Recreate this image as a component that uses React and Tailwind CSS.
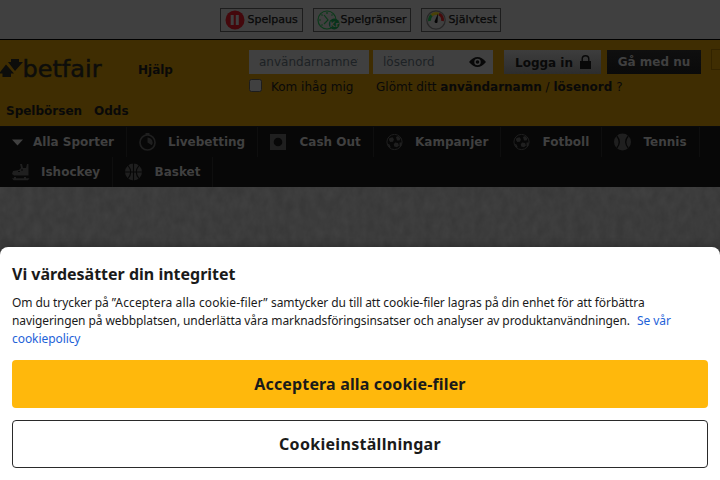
import React from "react";

function PauseIcon() {
  return (
    <svg width="20" height="20" viewBox="0 0 20 20">
      <circle cx="10" cy="10" r="9.5" fill="#44080c" />
      <rect x="5.7" y="5" width="3" height="10" fill="#404040" />
      <rect x="10.8" y="5" width="3" height="10" fill="#404040" />
    </svg>
  );
}

function LimitIcon() {
  return (
    <svg width="24" height="20" viewBox="0 0 24 20">
      <circle cx="10" cy="10" r="9" fill="none" stroke="#0b3a1a" strokeWidth="1.2" />
      <path d="M7 5l4 5-4 4M10 2v2M2 10h2M16 10h2M4.5 4.5l1 1M15.5 4.5l-1 1M4.5 15.5l1-1" fill="none" stroke="#0b3a1a" strokeWidth="1.2" />
      <circle cx="17.2" cy="14" r="5.4" fill="#08331a" />
      <text x="17.2" y="16.8" fontSize="7.5" fontWeight="700" fontFamily="DejaVu Sans, sans-serif" textAnchor="middle" fill="#404040" stroke="none">Kr</text>
    </svg>
  );
}

function GaugeIcon() {
  return (
    <svg width="20" height="20" viewBox="0 0 20 20" fill="none">
      <circle cx="10" cy="10" r="9.2" stroke="#272727" strokeWidth="1.2" />
      <path d="M3.5 11A6.8 6.8 0 0 1 5.6 5.2" stroke="#0b3a1a" strokeWidth="2.8" />
      <path d="M5.6 5.2A6.8 6.8 0 0 1 13 4" stroke="#4a4208" strokeWidth="2.8" />
      <path d="M13 4A6.8 6.8 0 0 1 16.5 11" stroke="#440b0c" strokeWidth="2.8" />
      <path d="M12 3.5l-.5 8.7a1.6 1.6 0 0 1-3-.7z" fill="#050505" />
    </svg>
  );
}

function Badge({ className, label, icon }) {
  return (
    <div className={"flex h-6 items-center border border-[#1d1d1d] text-[#080808] whitespace-nowrap " + className}>
      {icon}
      <span className="pt-px [-webkit-text-stroke:0.25px_#080808]">{label}</span>
    </div>
  );
}

function Logo() {
  return (
    <svg width="110" height="30" viewBox="0 0 110 30">
      <path d="M11 3h8v3h4l-8 9-7-9h3zM6 8.500l8 9h-3V21H2.500v-3.500H-1z" fill="#0d0d0b" />
      <text x="22.500" y="20.700" fontSize="23.500" fontFamily="DejaVu Sans, sans-serif" textLength="79" lengthAdjust="spacingAndGlyphs" fill="#0d0d0b" stroke="#0d0d0b" strokeWidth=".5">betfair</text>
    </svg>
  );
}

function Ball() {
  return (
    <svg width="17" height="17" viewBox="0 0 17 17">
      <circle cx="8.500" cy="8" r="7.600" fill="none" stroke="#1f1f1f" strokeWidth="1" />
      <path d="M3.500 4l3-.8 1.500 2-1 2.500-2.800.3L2.900 6zM10 3l2-1 2.500 2.500-1 2-2.500 0zM9 8.500l3 .5 1 2.500-2 1.800-2.800-.8L7.700 10.500zM1 9.500l2.500 1 1.200 2.500-1 1zM13.500 8.500l2.500 0-1 4-1.500 0z" fill="#1f1f1f" />
    </svg>
  );
}

function Clock() {
  return (
    <svg width="18" height="18" viewBox="0 0 18 18">
      <circle cx="8.5" cy="9.5" r="7.5" fill="none" stroke="#1f1f1f" strokeWidth="1.7" />
      <path d="M8.5 4.5a5 5 0 0 1 4.3 7.8L8.5 9.5zM6.5 0h4v2h-4z" fill="#1f1f1f" />
    </svg>
  );
}

function CashOut() {
  return (
    <svg width="16" height="16" viewBox="0 0 16 16">
      <path d="M0 0h16v16H0z" fill="#1f1f1f" />
      <circle cx="8" cy="8" r="4.3" fill="#070707" />
    </svg>
  );
}

function Tennis() {
  return (
    <svg width="18" height="18" viewBox="0 0 18 18">
      <circle cx="8.5" cy="9" r="8.5" fill="#1f1f1f" />
      <path d="M2.8 3q5 6 0 12M14.2 3q-5 6 0 12" fill="none" stroke="#070707" strokeWidth="1.3" />
    </svg>
  );
}

function Skate() {
  return (
    <svg width="18" height="18" viewBox="0 0 18 18" fill="#1f1f1f">
      <path d="M8 1h2l1 4h3l1-4h1.5v11.5H2L0 11l1-3 6-1 2-2zM2 14h2v1.2h8V14h2v1.2h3.5l-1.5 2H1.5L0 15.2h2z" />
      <path d="M6 8.5h2M9 7h2" stroke="#070707" />
    </svg>
  );
}

function Basket() {
  return (
    <svg width="18" height="18" viewBox="0 0 18 18">
      <circle cx="8.5" cy="9" r="8.5" fill="#1f1f1f" />
      <path d="M8.5 0v18M0 9h17M3 2.5q5.500 6.500 0 13M14 2.500q-5.500 6.500 0 13" fill="none" stroke="#070707" strokeWidth="1.1" />
    </svg>
  );
}

function Caret() {
  return (
    <svg width="11" height="7" viewBox="0 0 11 7">
      <path d="M0 .5h11L5.500 6.500z" fill="#404040" />
    </svg>
  );
}

function NavItem({ width, iconWidth = "w-[29px]", icon, label }) {
  return (
    <li className={"flex h-[30px] shrink-0 items-center border-r border-[#0e0e0e] pl-3 " + width}>
      <span className={"shrink-0 " + iconWidth}>{icon}</span>
      <span className="whitespace-nowrap">{label}</span>
    </li>
  );
}

function Texture() {
  return (
    <svg width="720" height="80" className="block">
      <filter id="grain" x="0" y="0" width="100%" height="100%" colorInterpolationFilters="sRGB">
        <feTurbulence type="fractalNoise" baseFrequency=".12 .08" numOctaves="3" seed="4" />
        <feColorMatrix values=".045 0 0 0 .212  .045 0 0 0 .212  .045 0 0 0 .212  0 0 0 0 1" />
      </filter>
      <rect width="720" height="80" fill="#3a3a3a" filter="url(#grain)" />
    </svg>
  );
}

function Header() {
  return (
    <header className="flex h-[86px] flex-col bg-[#3f2d02] text-[#090909]">
      <div className="flex h-[56px] pt-[9px]">
        <div className="flex w-[249px] shrink-0">
          <div className="w-[138px] pt-[7px]"><Logo /></div>
          <a className="pt-[13px] font-bold leading-4">Hjälp</a>
        </div>
        <div className="flex shrink-0 flex-col pt-px">
          <div className="flex h-6">
            <div className="w-[120px] overflow-hidden bg-[#404040] pl-[10px] leading-6 text-[#1d2225]">
              <div className="w-[99px] overflow-hidden whitespace-nowrap">användarnamnet</div>
            </div>
            <div className="ml-1 flex w-[120px] items-center justify-between bg-[#404040] pl-[10px] pr-[7px] text-[#1d2225]">
              lösenord
              <svg width="17" height="12" viewBox="0 0 17 12">
                <path d="M0 6Q8.500-4 17 6Q8.500 16 0 6z" fill="#080808" />
                <circle cx="8.500" cy="6" r="3.200" fill="#404040" />
                <circle cx="8.500" cy="6" r="1.800" fill="#080808" />
              </svg>
            </div>
            <button className="ml-[11px] flex w-[97px] items-center bg-linear-to-b from-[#3d3d3d] to-[#2d2d2d] pl-[11px] pt-px font-bold">
              <span className="whitespace-nowrap">Logga in</span>
              <svg className="-mt-[2px] ml-[7px]" width="11" height="14" viewBox="0 0 11 14">
                <path d="M0 6h11v8H0z" fill="#080808" />
                <path d="M2.200 7V4a3.300 3.300 0 0 1 6.600 0v3" fill="none" stroke="#080808" strokeWidth="1.400" />
              </svg>
            </button>
            <button className="ml-[6px] w-[94px] bg-linear-to-b from-[#0f0f0f] to-[#0a0a0a] font-bold text-[#404040]">Gå med nu</button>
            <div className="-mt-px ml-[10px] h-[21px] w-[12px] border border-[#322300]" />
          </div>
          <div className="flex pt-[5px] leading-4">
            <span className="h-[13px] w-[13px] rounded-[2.500px] border border-[#1d1d1d] bg-[#404040]" />
            <span className="ml-[9px] w-[105px]">Kom ihåg mig</span>
            <span className="whitespace-nowrap">Glömt ditt <b>användarnamn</b> / <b>lösenord</b> ?</span>
          </div>
        </div>
      </div>
      <div className="flex gap-3 pl-[6px] pt-[7px] font-bold leading-4">
        <a>Spelbörsen</a>
        <a>Odds</a>
      </div>
    </header>
  );
}

function CookieDialog() {
  return (
    <section className="absolute inset-x-0 bottom-0 h-[233px] rounded-t-[8px] bg-white px-3 pt-[15px] font-['Noto_Sans',sans-serif] text-[#1a1a1a] shadow-[0_0_8px_rgba(0,0,0,0.3)]">
      <h2 className="text-[16px] font-bold leading-6">Vi värdesätter din integritet</h2>
      <p className="mt-2 text-[12px] leading-[18px] tracking-[-0.09px]">
        Om du trycker på <span className="tracking-[0.12px]">”Acceptera alla cookie-filer” </span>samtycker du till att cookie-filer lagras på din enhet för att förbättra
        navigeringen på webbplatsen, underlätta våra marknadsföringsinsatser och analyser av produktanvändningen.
        <a className="ml-1 text-[#1e62d8] tracking-[-0.07px]"> Se vår<br />cookiepolicy</a>
      </p>
      <button className="mt-3 block h-12 w-full rounded-[4px] bg-[#ffb80c] text-[16px] font-bold tracking-[0.15px]">Acceptera alla cookie-filer</button>
      <button className="mt-3 block h-12 w-full rounded-[4px] border border-[#2a2a2a] bg-white text-[16px] font-bold tracking-[0.3px]">Cookieinställningar</button>
    </section>
  );
}

export default function App() {
  return (
    <div className="relative h-[480px] w-[720px] overflow-hidden bg-[#3b3b3b] font-['DejaVu_Sans',sans-serif] text-[12px]">
      <div className="flex h-10 justify-center gap-[10px] border-b border-black bg-[#404040] pt-2">
        <Badge className="w-[83px] gap-[3px] pl-1 text-[11px]" label="Spelpaus" icon={<PauseIcon />} />
        <Badge className="w-[98px] pl-[3px] text-[11px]" label="Spelgränser" icon={<LimitIcon />} />
        <Badge className="w-[80px] gap-[3px] pl-1 text-[11px] tracking-[0.1px]" label="Självtest" icon={<GaugeIcon />} />
      </div>
      <Header />
      <nav className="h-[61px] border-t border-[#08090b] bg-[#070707] font-bold text-[#404040]">
        <ul className="flex">
          <NavItem width="w-[127px]" iconWidth="w-[21px]" icon={<Caret />} label="Alla Sporter" />
          <NavItem width="w-[131px]" icon={<Clock />} label="Livebetting" />
          <NavItem width="w-[116px]" iconWidth="w-[29.500px]" icon={<CashOut />} label="Cash Out" />
          <NavItem width="w-[127px]" icon={<Ball />} label="Kampanjer" />
          <NavItem width="w-[101px]" iconWidth="w-[29.500px]" icon={<Ball />} label="Fotboll" />
          <NavItem width="w-[98px]" iconWidth="w-[29.500px]" icon={<Tennis />} label="Tennis" />
        </ul>
        <ul className="flex">
          <NavItem width="w-[113px]" icon={<Skate />} label="Ishockey" />
          <NavItem width="w-[100px]" iconWidth="w-[29.500px]" icon={<Basket />} label="Basket" />
        </ul>
      </nav>
      <Texture />
      <CookieDialog />
    </div>
  );
}
